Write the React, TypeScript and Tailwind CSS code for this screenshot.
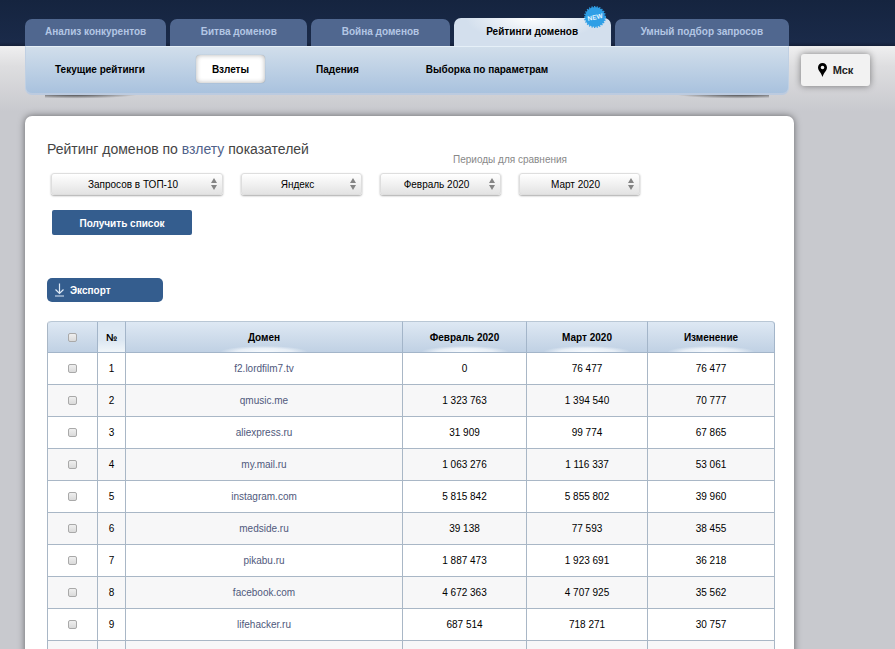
import React, { useState } from "react";

interface Tab {
  title: string;
  active?: boolean;
  isNew?: boolean;
}

interface Row {
  num: string;
  domain: string;
  prev: string;
  next: string;
  diff: string;
}

const tabs: Tab[] = [
  { title: "Анализ конкурентов" },
  { title: "Битва доменов" },
  { title: "Война доменов" },
  { title: "Рейтинги доменов", active: true, isNew: true },
  { title: "Умный подбор запросов" },
];

const subTabs = ["Текущие рейтинги", "Взлеты", "Падения", "Выборка по параметрам"];

const rows: Row[] = [
  { num: "1", domain: "f2.lordfilm7.tv", prev: "0", next: "76 477", diff: "76 477" },
  { num: "2", domain: "qmusic.me", prev: "1 323 763", next: "1 394 540", diff: "70 777" },
  { num: "3", domain: "aliexpress.ru", prev: "31 909", next: "99 774", diff: "67 865" },
  { num: "4", domain: "my.mail.ru", prev: "1 063 276", next: "1 116 337", diff: "53 061" },
  { num: "5", domain: "instagram.com", prev: "5 815 842", next: "5 855 802", diff: "39 960" },
  { num: "6", domain: "medside.ru", prev: "39 138", next: "77 593", diff: "38 455" },
  { num: "7", domain: "pikabu.ru", prev: "1 887 473", next: "1 923 691", diff: "36 218" },
  { num: "8", domain: "facebook.com", prev: "4 672 363", next: "4 707 925", diff: "35 562" },
  { num: "9", domain: "lifehacker.ru", prev: "687 514", next: "718 271", diff: "30 757" },
  { num: "", domain: "", prev: "", next: "", diff: "" },
];

const NewBadge = () => (
  <svg className="absolute -top-[13px] right-1 size-6" viewBox="0 0 24 24" aria-hidden="true">
    <circle cx="12" cy="12" r="10" fill="#2f9fe6" />
    <circle cx="12" cy="12" r="10.2" fill="none" stroke="#2f9fe6" strokeWidth="1.6" strokeDasharray="1.3 1.3" />
    <text
      x="12"
      y="14.4"
      textAnchor="middle"
      fontSize="6.5"
      fontWeight="bold"
      fill="#e6f6ff"
      fontFamily="Liberation Sans, sans-serif"
      transform="rotate(-12 12 12)"
    >
      NEW
    </text>
  </svg>
);

const Select = ({ label, value, className }: { label: string; value: string; className: string }) => (
  <label className={`relative block ${className}`}>
    <select
      aria-label={label}
      defaultValue={value}
      className="block h-[22px] w-full appearance-none rounded-[3px] border border-[#dedede] bg-linear-to-b from-white to-[#e3e3e3] pr-2 text-center text-[10px] text-black shadow-[0_1px_2px_rgba(0,0,0,0.35)] [text-align-last:center]"
    >
      <option>{value}</option>
    </select>
    <svg className="pointer-events-none absolute top-[5px] right-[6px] h-3 w-[6px]" viewBox="0 0 6 12" fill="#848484">
      <path d="M3 0L6 5H0zM3 12L0 7H6z" />
    </svg>
  </label>
);

const Checkbox = ({ label }: { label: string }) => (
  <input
    type="checkbox"
    aria-label={label}
    className="mx-auto block size-[9px] appearance-none rounded-[2px] border border-[#a9a9a9] bg-linear-to-b from-[#efefef] to-[#dadada] checked:bg-[#345d8e]"
  />
);

// light spot at the bottom of a header cell
const Glow = () => (
  <span className="pointer-events-none absolute bottom-0 left-1/2 h-[6px] w-[86px] -translate-x-1/2 bg-[radial-gradient(ellipse_at_bottom,#f8fbfe_0%,rgba(248,251,254,0.7)_45%,transparent_72%)]" />
);

const App = () => {
  const [current, setCurrent] = useState("Взлеты");

  return (
    <div className="h-screen overflow-hidden bg-[#c8c9ce] bg-[linear-gradient(#15243f_0px,#1a2a49_42px,#142039_46px,#efeff0_46px,#dedee0_66px,#c8c9ce_112px)] font-['Liberation_Sans',Arial,sans-serif] text-[10px] text-black">
      <div className="flex items-start gap-[7px] px-[25px]">
        <div className="min-w-0 flex-1">
          <header className="mr-[5px] pt-[18px]">
            <nav className="grid grid-cols-[141fr_137fr_138fr_157fr_174fr] items-end gap-1">
              {tabs.map((tab) => (
                <a
                  key={tab.title}
                  href="#"
                  className={
                    tab.active
                      ? "relative flex h-7 items-center justify-center rounded-t-[7px] bg-[radial-gradient(ellipse_at_top,#ffffff_0%,#d3dfed_60%)] pb-[2px] font-bold whitespace-nowrap text-black"
                      : "flex h-[27px] items-center justify-center rounded-t-[7px] bg-[#50678f] pb-[2px] font-bold whitespace-nowrap text-[#b3c6e4]"
                  }
                >
                  {tab.title}
                  {tab.isNew && <NewBadge />}
                </a>
              ))}
            </nav>

            <div className="relative">
              <span className="absolute -bottom-[4px] left-[20px] h-[10px] w-[100px] bg-[radial-gradient(ellipse_at_30%_50%,rgba(0,0,0,0.75),transparent_65%)]" />
              <span className="absolute right-[20px] -bottom-[4px] h-[10px] w-[100px] bg-[radial-gradient(ellipse_at_70%_50%,rgba(0,0,0,0.75),transparent_65%)]" />
              <nav className="relative flex h-[49px] items-center gap-[35px] rounded-b-[7px] border-x border-t border-b-2 border-x-[#c0d0e3] border-t-[#e6f0f8] border-b-[#bccbe0] bg-linear-to-b from-[#d1deeb] to-[#a9c2de] pb-[2px] pl-[13px]">
                {subTabs.map((name) => (
                  <button
                    key={name}
                    type="button"
                    onClick={() => setCurrent(name)}
                    className={
                      name === current
                        ? "h-7 rounded-[4px] bg-white px-4 font-bold whitespace-nowrap shadow-[inset_0_0_5px_rgba(0,0,0,0.3),0_0_1px_rgba(0,0,0,0.3)]"
                        : "h-7 px-4 font-bold whitespace-nowrap"
                    }
                  >
                    {name}
                  </button>
                ))}
              </nav>
            </div>
          </header>

          <main className="mt-[21px] min-h-screen rounded-[7px] bg-white pt-[25px] pr-[19px] pl-[22px] shadow-[0_0_7px_rgba(0,0,0,0.5)]">
            <h1 className="text-[14px] leading-4 text-[#444]">
              Рейтинг доменов по{" "}
              <a href="#" className="text-[#50628a]">
                взлету
              </a>{" "}
              показателей
            </h1>

            <form onSubmit={(e) => e.preventDefault()}>
              <div className="-mt-[2px] flex items-end gap-[18px] pl-1">
                <Select label="Показатель" value="Запросов в ТОП-10" className="w-[172px]" />
                <Select label="Поисковая система" value="Яндекс" className="w-[121px]" />
                <fieldset>
                  <legend className="mx-auto mb-2 leading-[10px] text-[#888]">Периоды для сравнения</legend>
                  <div className="flex gap-[18px]">
                    <Select label="Первый период" value="Февраль 2020" className="w-[121px]" />
                    <Select label="Второй период" value="Март 2020" className="w-[121px]" />
                  </div>
                </fieldset>
              </div>

              <button
                type="submit"
                className="mt-[15px] ml-[5px] block h-[25px] w-[140px] rounded-[2px] bg-[#345d8e] pt-[2px] font-bold text-white"
              >
                Получить список
              </button>
            </form>

            <button
              type="button"
              className="mt-[43px] flex h-6 w-[116px] items-center gap-[5px] rounded-[5px] bg-[#345d8e] pl-[7px] font-bold text-white"
            >
              <svg className="h-[14px] w-[11px]" viewBox="0 0 11 14" fill="none" stroke="#dce8f5" strokeWidth="1.2">
                <path d="M5.5 0.5V10.5M1.5 6.5L5.5 10.5L9.5 6.5M1 13H10" />
              </svg>
              Экспорт
            </button>

            <table className="mt-[19px] w-full table-fixed border-separate border-spacing-0 rounded-t-[4px] border-l border-[#a9b7c6] text-center">
              <thead>
                <tr className="h-8 bg-linear-to-b from-[#dfe9f4] to-[#bfd0e3] [&>th]:relative [&>th]:border-t [&>th]:border-r [&>th]:border-b [&>th]:border-[#a3b5c9] [&>th]:border-t-[#b9c7d5] [&>th]:p-0">
                  <th className="w-[50px] rounded-tl-[4px]">
                    <Checkbox label="Выбрать все" />
                  </th>
                  <th className="w-[28px] bg-linear-to-b from-[#dce7f2] from-60% to-[#f1f6fa]">№</th>
                  <th>
                    Домен
                    <Glow />
                  </th>
                  <th className="w-[124px]">
                    Февраль 2020
                    <Glow />
                  </th>
                  <th className="w-[121px]">
                    Март 2020
                    <Glow />
                  </th>
                  <th className="w-[127px] rounded-tr-[4px]">
                    Изменение
                    <Glow />
                  </th>
                </tr>
              </thead>
              <tbody>
                {rows.map((row, index) => (
                  <tr
                    key={index}
                    className="h-8 even:bg-[#f7f7f8] [&>td]:border-r [&>td]:border-b [&>td]:border-[#a9b7c6] [&>td]:p-0"
                  >
                    <td>
                      <Checkbox label={row.domain} />
                    </td>
                    <td>{row.num}</td>
                    <td>
                      <a href="#" className="text-[#50597c]">
                        {row.domain}
                      </a>
                    </td>
                    <td>{row.prev}</td>
                    <td>{row.next}</td>
                    <td>{row.diff}</td>
                  </tr>
                ))}
              </tbody>
            </table>
          </main>
        </div>

        <button
          type="button"
          className="mt-[54px] flex h-8 w-[69px] items-center justify-center gap-[6px] rounded-[3px] bg-[#f2f2f2] text-[11px] font-bold text-[#222] shadow-[0_0_7px_rgba(0,0,0,0.45)]"
        >
          <svg className="h-[14px] w-[9px]" viewBox="0 0 9 14" fill="#000">
            <path
              fillRule="evenodd"
              d="M4.5 0C7 0 9 2 9 4.5C9 7.5 5.8 9.6 4.5 14C3.2 9.6 0 7.5 0 4.5C0 2 2 0 4.5 0ZM4.5 2.7A1.8 1.8 0 1 0 4.5 6.3A1.8 1.8 0 1 0 4.5 2.7Z"
            />
          </svg>
          Мск
        </button>
      </div>
    </div>
  );
};

export default App;
